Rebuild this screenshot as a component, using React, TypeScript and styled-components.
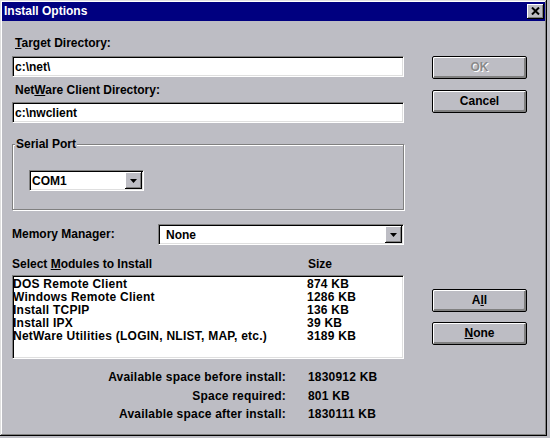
import React from "react";
import styled, { createGlobalStyle } from "styled-components";

const FACE = "#bdbdc4";

const Global = createGlobalStyle`
  html, body { margin: 0; padding: 0; background: ${FACE}; }
  body { font-family: "Liberation Sans", Arial, sans-serif; }
`;

const Page = styled.div`
  width: 550px;
  height: 438px;
  background: ${FACE};
  overflow: hidden;
`;

const Window = styled.div`
  width: 547px;
  height: 436px;
  box-sizing: border-box;
  padding: 2px;
  background: ${FACE};
  box-shadow: inset -1px -1px 0 #000, inset 1px 1px 0 #dfdfdf,
    inset -2px -2px 0 #808080, inset 2px 2px 0 #fff;
  display: flex;
  flex-direction: column;
  font: bold 12px "Liberation Sans", Arial, sans-serif;
  color: #000;
`;

const TitleBar = styled.div`
  height: 19px;
  background: #000080;
  color: #fff;
  display: flex;
  align-items: center;
  justify-content: space-between;
  padding: 0 1px 0 2px;
`;

const TitleText = styled.span`
  font-weight: bold;
  font-size: 12px;
  line-height: 13px;
`;

const CloseButton = styled.div`
  width: 17px;
  height: 15px;
  box-sizing: border-box;
  background: ${FACE};
  box-shadow: inset -1px -1px 0 #000, inset 1px 1px 0 #fff,
    inset -2px -2px 0 #808080;
  display: flex;
  align-items: center;
  justify-content: center;
  padding-bottom: 1px;
`;

const Body = styled.div`
  display: grid;
  grid-template-columns: 392px 95px;
  column-gap: 28px;
  padding-left: 10px;
`;

const LeftColumn = styled.div`
  display: flex;
  flex-direction: column;
`;

const RightColumn = styled.div`
  display: flex;
  flex-direction: column;
`;

const Label = styled.div<{ $mt: number; $indent?: number }>`
  margin-top: ${(p) => p.$mt}px;
  padding-left: ${(p) => p.$indent ?? 0}px;
  line-height: 13px;
  height: 13px;
  white-space: nowrap;
`;

const TextField = styled.input<{ $mt: number }>`
  margin: ${(p) => p.$mt}px 0 0 0;
  width: 392px;
  height: 21px;
  box-sizing: border-box;
  border-style: solid;
  border-width: 1px;
  border-color: #808080 #fff #fff #808080;
  box-shadow: inset 1px 1px 0 #000, inset -1px -1px 0 #dfdfdf;
  background: #fff;
  padding: 0 0 0 2px;
  font: bold 12px "Liberation Sans", Arial, sans-serif;
  color: #000;
  outline: none;
`;

const GroupBox = styled.fieldset`
  margin: 14px 0 0 0;
  padding: 0 0 18px 0;
  min-width: 0;
  border: 1px solid #808080;
  box-shadow: inset 1px 1px 0 #fff, 1px 1px 0 #fff;
`;

const GroupLegend = styled.legend`
  margin-left: 2px;
  padding: 0 1px;
  line-height: 13px;
  background: ${FACE};
  font: bold 12px "Liberation Sans", Arial, sans-serif;
`;

const Combo = styled.div<{ $width: number; $mt?: number; $ml?: number }>`
  width: ${(p) => p.$width}px;
  height: 21px;
  margin-top: ${(p) => p.$mt ?? 0}px;
  margin-left: ${(p) => p.$ml ?? 0}px;
  box-sizing: border-box;
  border-style: solid;
  border-width: 1px;
  border-color: #808080 #fff #fff #808080;
  box-shadow: inset 1px 1px 0 #000, inset -1px -1px 0 #dfdfdf;
  background: #fff;
  display: flex;
  padding: 1px;
`;

const ComboText = styled.div<{ $pad: number }>`
  flex: 1;
  padding-left: ${(p) => p.$pad}px;
  display: flex;
  align-items: center;
`;

const ComboButton = styled.div`
  width: 17px;
  box-sizing: border-box;
  background: ${FACE};
  box-shadow: inset -1px -1px 0 #000, inset 1px 1px 0 #fff,
    inset -2px -2px 0 #808080;
  display: flex;
  align-items: center;
  justify-content: center;
`;

const MemoryRow = styled.div`
  display: flex;
  align-items: center;
  margin-top: 14px;
`;

const MemoryLabel = styled.div`
  width: 146px;
  line-height: 13px;
`;

const ModulesHeader = styled.div`
  display: grid;
  grid-template-columns: 296px 1fr;
  margin-top: 13px;
  line-height: 13px;
`;

const ListBox = styled.div`
  margin-top: 4px;
  height: 84px;
  box-sizing: border-box;
  border-style: solid;
  border-width: 1px;
  border-color: #808080 #fff #fff #808080;
  box-shadow: inset 1px 1px 0 #000, inset -1px -1px 0 #dfdfdf;
  background: #fff;
  padding: 2px 0 0 0;
`;

const ListRow = styled.div`
  display: grid;
  grid-template-columns: 294px 1fr;
  line-height: 13px;
  height: 13px;
  white-space: nowrap;
  letter-spacing: 0.25px;
`;

const Stats = styled.div`
  display: grid;
  grid-template-columns: 274px 1fr;
  column-gap: 22px;
  margin-top: 9px;
  line-height: 18.5px;
  letter-spacing: 0.2px;
`;

const StatLabel = styled.div`
  text-align: right;
  white-space: nowrap;
`;

const StatValue = styled.div`
  white-space: nowrap;
`;

const Button = styled.div<{ $mt: number; $disabled?: boolean }>`
  margin-top: ${(p) => p.$mt}px;
  height: 23px;
  box-sizing: border-box;
  border: 1px solid #000;
  border-radius: 2px;
  background: ${FACE};
  box-shadow: inset 1px 1px 0 #fff, inset -1px -1px 0 #808080,
    inset -2px -2px 0 #808080;
  display: flex;
  align-items: center;
  justify-content: center;
  padding-bottom: 1px;
  color: ${(p) => (p.$disabled ? "#8a8a8a" : "#000")};
  text-shadow: ${(p) => (p.$disabled ? "1px 1px 0 #fff" : "none")};
`;

const Mn = styled.span`
  text-decoration: underline;
  text-underline-offset: 1px;
`;

const CloseGlyph = () => (
  <svg width="9" height="8" viewBox="0 0 9 8">
    <path d="M1 0.5 L8 7.5 M8 0.5 L1 7.5" stroke="#000" strokeWidth="2" />
  </svg>
);

const ArrowGlyph = () => (
  <svg width="7" height="4" viewBox="0 0 7 4">
    <path d="M0 0 H7 L3.5 4 Z" fill="#000" />
  </svg>
);

const modules = [
  ["DOS Remote Client", "874 KB"],
  ["Windows Remote Client", "1286 KB"],
  ["Install TCPIP", "136 KB"],
  ["Install IPX", "39 KB"],
  ["NetWare Utilities (LOGIN, NLIST, MAP, etc.)", "3189 KB"],
];

const stats = [
  ["Available space before install:", "1830912 KB"],
  ["Space required:", "801 KB"],
  ["Available space after install:", "1830111 KB"],
];

export default function App() {
  return (
    <Page>
      <Global />
      <Window>
        <TitleBar>
          <TitleText>Install Options</TitleText>
          <CloseButton>
            <CloseGlyph />
          </CloseButton>
        </TitleBar>
        <Body>
          <LeftColumn>
            <Label $mt={16} $indent={3}>
              <Mn>T</Mn>arget Directory:
            </Label>
            <TextField $mt={6} defaultValue={"c:\\net\\"} readOnly />
            <Label $mt={7} $indent={3}>
              Net<Mn>W</Mn>are Client Directory:
            </Label>
            <TextField $mt={5} defaultValue={"c:\\nwclient"} readOnly />
            <GroupBox>
              <GroupLegend>Serial Port</GroupLegend>
              <Combo $width={115} $mt={19} $ml={16}>
                <ComboText $pad={1}>COM1</ComboText>
                <ComboButton>
                  <ArrowGlyph />
                </ComboButton>
              </Combo>
            </GroupBox>
            <MemoryRow>
              <MemoryLabel>Memory Manager:</MemoryLabel>
              <Combo $width={246}>
                <ComboText $pad={6}>None</ComboText>
                <ComboButton>
                  <ArrowGlyph />
                </ComboButton>
              </Combo>
            </MemoryRow>
            <ModulesHeader>
              <span>
                Select <Mn>M</Mn>odules to Install
              </span>
              <span>Size</span>
            </ModulesHeader>
            <ListBox>
              {modules.map(([name, size]) => (
                <ListRow key={name}>
                  <span>{name}</span>
                  <span>{size}</span>
                </ListRow>
              ))}
            </ListBox>
            <Stats>
              {stats.map(([label, value]) => (
                <React.Fragment key={label}>
                  <StatLabel>{label}</StatLabel>
                  <StatValue>{value}</StatValue>
                </React.Fragment>
              ))}
            </Stats>
          </LeftColumn>
          <RightColumn>
            <Button $mt={35} $disabled>
              OK
            </Button>
            <Button $mt={11}>Cancel</Button>
            <Button $mt={176}>
              A<Mn>l</Mn>l
            </Button>
            <Button $mt={10}>
              <Mn>N</Mn>one
            </Button>
          </RightColumn>
        </Body>
      </Window>
    </Page>
  );
}
